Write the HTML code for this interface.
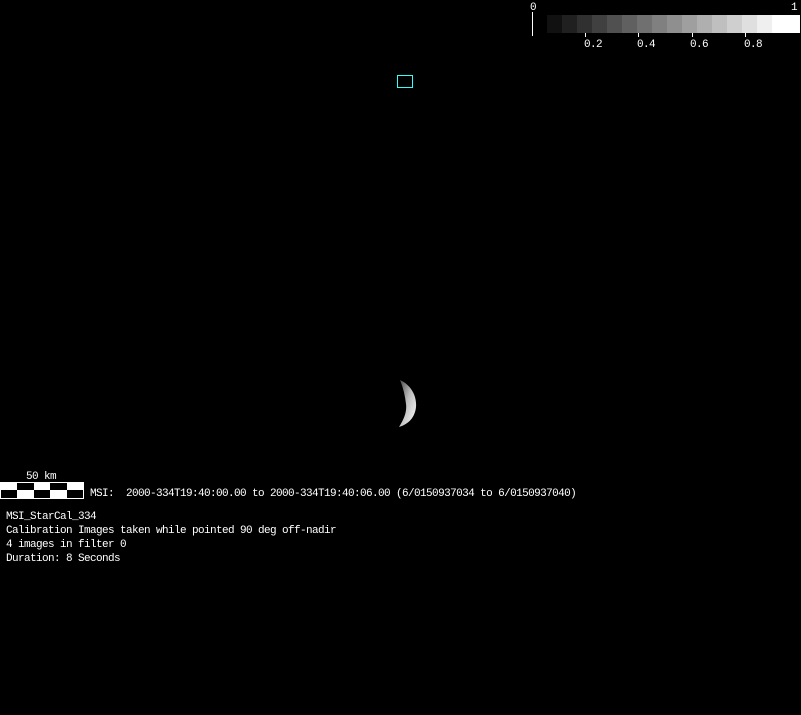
<!DOCTYPE html>
<html><head><style>
html,body{margin:0;padding:0;background:#000;width:801px;height:715px;overflow:hidden}
body{position:relative;font-family:"Liberation Mono","DejaVu Sans Mono",monospace;color:#fff;font-size:11px;letter-spacing:-0.6px}
.t{position:absolute;white-space:pre;line-height:14px}
.c{position:absolute;top:15px;height:18px;width:15px}
</style></head><body>
<div style="position:absolute;left:532px;top:12px;width:1px;height:24px;background:#fff"></div>
<div class="t" style="left:530px;top:1px">0</div>
<div class="t" style="left:791px;top:1px">1</div>
<div class="c" style="left:547px;background:#111"></div>
<div class="c" style="left:562px;background:#202020"></div>
<div class="c" style="left:577px;background:#303030"></div>
<div class="c" style="left:592px;background:#404040"></div>
<div class="c" style="left:607px;background:#505050"></div>
<div class="c" style="left:622px;background:#606060"></div>
<div class="c" style="left:637px;background:#707070"></div>
<div class="c" style="left:652px;background:#808080"></div>
<div class="c" style="left:667px;background:#8f8f8f"></div>
<div class="c" style="left:682px;background:#9f9f9f"></div>
<div class="c" style="left:697px;background:#afafaf"></div>
<div class="c" style="left:712px;background:#bfbfbf"></div>
<div class="c" style="left:727px;background:#cfcfcf"></div>
<div class="c" style="left:742px;background:#dfdfdf"></div>
<div class="c" style="left:757px;background:#efefef"></div>
<div class="c" style="left:772px;width:28px;background:#fff"></div>
<div style="position:absolute;left:585px;top:33px;width:1px;height:4px;background:#fff"></div>
<div style="position:absolute;left:638px;top:33px;width:1px;height:4px;background:#fff"></div>
<div style="position:absolute;left:692px;top:33px;width:1px;height:4px;background:#fff"></div>
<div style="position:absolute;left:745px;top:33px;width:1px;height:4px;background:#fff"></div>
<div class="t" style="left:584px;top:38px">0.2</div>
<div class="t" style="left:637px;top:38px">0.4</div>
<div class="t" style="left:690px;top:38px">0.6</div>
<div class="t" style="left:744px;top:38px">0.8</div>

<div style="position:absolute;left:397px;top:75px;width:14px;height:11px;border:1px solid #3ff;"></div>

<svg style="position:absolute;left:380px;top:370px" width="50" height="65">
<defs><linearGradient id="g" x1="0" y1="0" x2="1" y2="1"><stop offset="0" stop-color="#444"/><stop offset="0.45" stop-color="#bbb"/><stop offset="1" stop-color="#fff"/></linearGradient></defs>
<path d="M20 10 C31 15 37 26 36 37 C35 47 29 54 19 57 C24 49 27 42 26 34 C25 25 23 17 20 10 Z" fill="url(#g)"/>
</svg>

<div class="t" style="left:26px;top:470px">50 km</div>
<svg style="position:absolute;left:0;top:482px" width="84" height="17">
<rect x="0.5" y="0.5" width="83" height="16" fill="#000" stroke="#fff"/>
<rect x="1" y="1" width="16" height="7" fill="#fff"/>
<rect x="34" y="1" width="16" height="7" fill="#fff"/>
<rect x="67" y="1" width="16" height="7" fill="#fff"/>
<rect x="17" y="8" width="17" height="8" fill="#fff"/>
<rect x="50" y="8" width="17" height="8" fill="#fff"/>
</svg>
<div class="t" style="left:90px;top:487px">MSI:  2000-334T19:40:00.00 to 2000-334T19:40:06.00 (6/0150937034 to 6/0150937040)</div>
<div class="t" style="left:6px;top:510px">MSI_StarCal_334
Calibration Images taken while pointed 90 deg off-nadir
4 images in filter 0
Duration: 8 Seconds</div>
</body></html>
